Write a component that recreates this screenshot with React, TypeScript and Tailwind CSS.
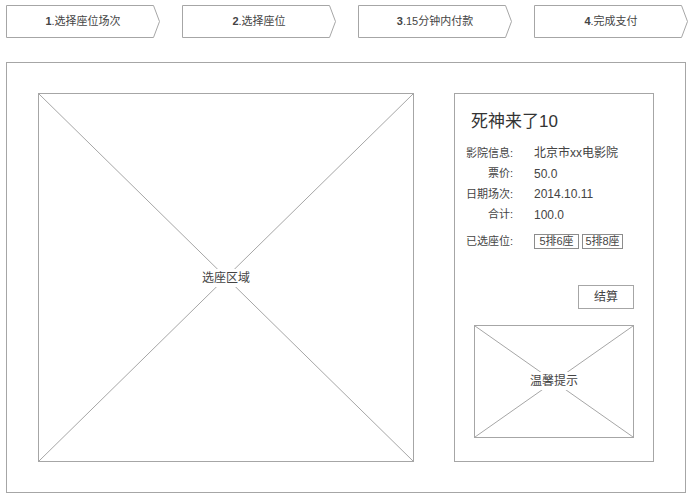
import React from "react";

const font = { fontFamily: '"Liberation Sans", "Noto Sans CJK SC", sans-serif' };

function Step({ num, text }: { num: string; text: string }) {
  return (
    <div className="relative h-[33px] w-[154px] shrink-0">
      <svg className="absolute inset-0" width="154" height="33" viewBox="0 0 154 33">
        <polygon
          points="0.5,0.5 147.5,0.5 153.5,16.5 147.5,32.5 0.5,32.5"
          fill="white"
          stroke="#a6a6a6"
          strokeWidth="1"
        />
      </svg>
      <div className="relative flex h-full w-[154px] items-center justify-center whitespace-nowrap text-[11px] text-[#444]">
        <span className="font-bold">{num}</span>
        <span>{text}</span>
      </div>
    </div>
  );
}

function Placeholder({ label, className }: { label: string; className: string }) {
  return (
    <div className={"relative flex items-center justify-center border border-[#a6a6a6] " + className}>
      <svg className="absolute inset-0 h-full w-full" preserveAspectRatio="none" viewBox="0 0 100 100">
        <line x1="0" y1="0" x2="100" y2="100" stroke="#a6a6a6" strokeWidth="1" vectorEffect="non-scaling-stroke" />
        <line x1="100" y1="0" x2="0" y2="100" stroke="#a6a6a6" strokeWidth="1" vectorEffect="non-scaling-stroke" />
      </svg>
      <span className="relative bg-white px-[3px] text-[12px] leading-[18px] text-[#444]">{label}</span>
    </div>
  );
}

function Row({ label, children, className = "" }: { label: string; children: React.ReactNode; className?: string }) {
  return (
    <div className={"flex h-[20px] items-center whitespace-nowrap text-[12px] text-[#444] " + className}>
      <div className="w-[58px] shrink-0 text-right text-[11px]">{label}</div>
      <div className="ml-[21px] flex items-center gap-[3px]">{children}</div>
    </div>
  );
}

export default function App() {
  return (
    <div className="h-[498px] w-[692px] bg-white" style={font}>
      <div className="flex gap-[22px] pl-[6px] pt-[5px]">
        <Step num="1" text=".选择座位场次" />
        <Step num="2" text=".选择座位" />
        <Step num="3" text=".15分钟内付款" />
        <Step num="4" text=".完成支付" />
      </div>
      <div className="ml-[6px] mt-[24px] flex h-[431px] w-[680px] gap-[40px] border border-[#a6a6a6] px-[31px] py-[30px]">
        <Placeholder label="选座区域" className="h-[369px] w-[376px]" />
        <div className="flex h-[369px] w-[200px] flex-col border border-[#a6a6a6]">
          <div className="ml-[16px] mt-[16px] h-[24px] whitespace-nowrap text-[17px] leading-[24px] text-[#333]">死神来了10</div>
          <div className="mt-[9px] flex flex-col">
            <Row label="影院信息:">北京市xx电影院</Row>
            <Row label="票价:" className="mt-[0.5px]">50.0</Row>
            <Row label="日期场次:" className="mt-[0.5px]">2014.10.11</Row>
            <Row label="合计:" className="mt-[0.5px]">100.0</Row>
            <Row label="已选座位:" className="mt-[7px]">
              <span className="flex h-[15px] w-[45px] items-center justify-center border border-[#8c8c8c] text-[11px]">5排6座</span>
              <span className="flex h-[15px] w-[41px] items-center justify-center border border-[#8c8c8c] text-[11px]">5排8座</span>
            </Row>
          </div>
          <div className="mr-[19px] mt-[33px] flex justify-end">
            <div className="flex h-[24px] w-[56px] items-center justify-center border border-[#a6a6a6] text-[12px] text-[#444]">
              结算
            </div>
          </div>
          <div className="ml-[19px] mt-[16px]">
            <Placeholder label="温馨提示" className="h-[113px] w-[160px]" />
          </div>
        </div>
      </div>
    </div>
  );
}
